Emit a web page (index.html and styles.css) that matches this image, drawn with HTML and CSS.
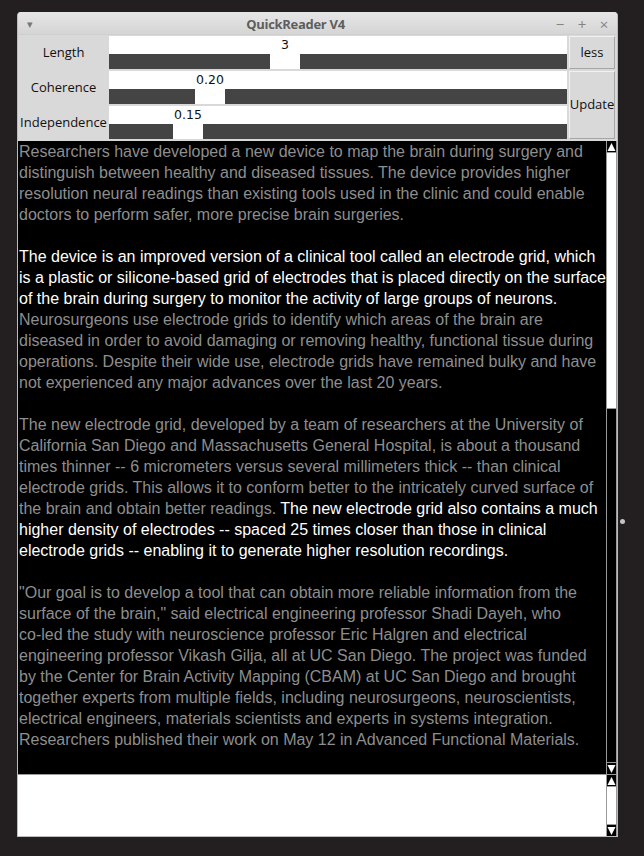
FILE: index.html
```html
<!DOCTYPE html>
<html>
<head>
<meta charset="utf-8">
<title>QuickReader V4</title>
<link rel="stylesheet" href="styles.css">
</head>
<body>
<div class="window">
  <div class="titlebar">
    <div class="tb-left">▾</div>
    <div class="tb-title">QuickReader V4</div>
    <div class="tb-right"><span>−</span><span>+</span><span>×</span></div>
  </div>
  <div class="controls">
    <div class="label r1">Length</div>
    <div class="slider r1">
      <div class="val-row"><div class="spacer" style="width:161px"></div><div class="val">3</div></div>
      <div class="trough"><div class="seg" style="width:161px"></div><div class="thumb"></div><div class="seg fill"></div></div>
    </div>
    <div class="btn b-less">less</div>

    <div class="label r2">Coherence</div>
    <div class="slider r2">
      <div class="val-row"><div class="spacer" style="width:86px"></div><div class="val">0.20</div></div>
      <div class="trough"><div class="seg" style="width:86px"></div><div class="thumb"></div><div class="seg fill"></div></div>
    </div>
    <div class="btn b-update">Update</div>

    <div class="label r3">Independence</div>
    <div class="slider r3">
      <div class="val-row"><div class="spacer" style="width:64px"></div><div class="val">0.15</div></div>
      <div class="trough"><div class="seg" style="width:64px"></div><div class="thumb"></div><div class="seg fill"></div></div>
    </div>
  </div>

  <div class="textrow">
    <div class="text">Researchers have developed a new device to map the brain during surgery and<br>distinguish between healthy and diseased tissues. The device provides higher<br>resolution neural readings than existing tools used in the clinic and could enable<br>doctors to perform safer, more precise brain surgeries.<br>&nbsp;<br><span class="hi">The device is an improved version of a clinical tool called an electrode grid, which<br>is a plastic or silicone-based grid of electrodes that is placed directly on the surface<br>of the brain during surgery to monitor the activity of large groups of neurons.</span><br>Neurosurgeons use electrode grids to identify which areas of the brain are<br>diseased in order to avoid damaging or removing healthy, functional tissue during<br>operations. Despite their wide use, electrode grids have remained bulky and have<br>not experienced any major advances over the last 20 years.<br>&nbsp;<br>The new electrode grid, developed by a team of researchers at the University of<br>California San Diego and Massachusetts General Hospital, is about a thousand<br>times thinner -- 6 micrometers versus several millimeters thick -- than clinical<br>electrode grids. This allows it to conform better to the intricately curved surface of<br>the brain and obtain better readings. <span class="hi">The new electrode grid also contains a much<br>higher density of electrodes -- spaced 25 times closer than those in clinical<br>electrode grids -- enabling it to generate higher resolution recordings.</span><br>&nbsp;<br>"Our goal is to develop a tool that can obtain more reliable information from the<br>surface of the brain," said electrical engineering professor Shadi Dayeh, who<br>co-led the study with neuroscience professor Eric Halgren and electrical<br>engineering professor Vikash Gilja, all at UC San Diego. The project was funded<br>by the Center for Brain Activity Mapping (CBAM) at UC San Diego and brought<br>together experts from multiple fields, including neurosurgeons, neuroscientists,<br>electrical engineers, materials scientists and experts in systems integration.<br>Researchers published their work on May 12 in Advanced Functional Materials.</div>
    <div class="sb sb-dark">
      <div class="arrow"><svg width="9" height="10" viewBox="0 0 9 10"><polygon points="4.5,1 8.5,9 0.5,9" fill="#fff"/></svg></div>
      <div class="sb-thumb"></div>
      <div class="sb-trough"></div>
      <div class="arrow"><svg width="9" height="10" viewBox="0 0 9 10"><polygon points="0.5,1 8.5,1 4.5,9" fill="#fff"/></svg></div>
    </div>
  </div>

  <div class="textrow lower">
    <div class="text2"></div>
    <div class="sb sb-light">
      <div class="arrow"><svg width="9" height="10" viewBox="0 0 9 10"><polygon points="4.5,1 8.5,9 0.5,9" fill="#fff"/></svg></div>
      <div class="sb-trough"></div>
      <div class="arrow"><svg width="9" height="10" viewBox="0 0 9 10"><polygon points="0.5,1 8.5,1 4.5,9" fill="#fff"/></svg></div>
    </div>
  </div>
</div>
<div class="grip"></div>
</body>
</html>
```
FILE: styles.css
```css
html, body {
  margin: 0;
  padding: 0;
  background: #231f20;
  width: 644px;
  height: 856px;
  overflow: hidden;
}

.window {
  margin: 12px 0 0 17px;
  width: 601px;
  box-sizing: border-box;
  border-left: 1px solid #bcbcbc;
  border-right: 1px solid #bcbcbc;
  border-bottom: 1px solid #bcbcbc;
  border-radius: 4px 4px 0 0;
  background: #d9d9d9;
  overflow: hidden;
}

.titlebar {
  height: 23px;
  display: grid;
  grid-template-columns: 30px 1fr 74px;
  align-items: center;
  background: linear-gradient(#e6e6e6, #d5d5d5);
  border-bottom: 1px solid #cfcfcf;
  box-sizing: border-box;
  font-family: "Open Sans", Lato, sans-serif;
  color: #6a6a6a;
}
.tb-left {
  padding-left: 9px;
  font-size: 11px;
  color: #777;
  padding-top: 1px;
}
.tb-title {
  text-align: center;
  font-weight: 700;
  font-size: 13px;
  letter-spacing: -0.3px;
  color: #5e5e5e;
  padding-top: 1px;
}
.tb-right {
  display: flex;
  justify-content: flex-end;
  padding-right: 2px;
  font-size: 15px;
  color: #848484;
  padding-top: 1px;
}
.tb-right span {
  width: 22px;
  text-align: center;
}

.controls {
  display: grid;
  grid-template-columns: 91px 458px 48px;
  grid-template-rows: 33px 33px 33px;
  column-gap: 0;
  row-gap: 2px;
  padding: 1px 0 1px 0;
  font-family: "Open Sans", "DejaVu Sans", sans-serif;
  font-size: 13px;
  color: #111;
}
.controls .btn { margin-left: 2px; }
.label {
  display: flex;
  align-items: center;
  justify-content: center;
  padding-bottom: 2px;
}
.r1 { grid-row: 1; }
.r2 { grid-row: 2; }
.r3 { grid-row: 3; }
.label { grid-column: 1; }
.slider { grid-column: 2; }

.slider {
  display: flex;
  flex-direction: column;
  background: #fff;
}
.val-row {
  height: 18px;
  display: flex;
}
.val {
  width: 30px;
  text-align: center;
  font-family: "DejaVu Sans", sans-serif;
  font-size: 12.5px;
  line-height: 18px;
  white-space: nowrap;
  display: flex;
  justify-content: center;
}
.trough {
  height: 15px;
  display: flex;
}
.seg { background: #444; }
.seg.fill { flex: 1; }
.thumb {
  width: 30px;
  background: #fff;
}

.btn {
  grid-column: 3;
  display: flex;
  align-items: center;
  justify-content: center;
  background: #d9d9d9;
  border: 1px solid;
  border-color: #f2f2f2 #a5a5a5 #a5a5a5 #f2f2f2;
  box-sizing: border-box;
  padding-bottom: 2px;
}
.b-less { grid-row: 1; }
.b-update { grid-row: 2 / span 2; }

.textrow {
  display: flex;
  height: 633px;
  margin-top: 1px;
}
.text {
  flex: 1;
  background: #000;
  color: #8e8e8e;
  font-family: "Liberation Sans", Arial, sans-serif;
  font-size: 16px;
  line-height: 21px;
  padding: 0 0 0 1px;
  white-space: nowrap;
  overflow: hidden;
}
.hi { color: #fff; }

.sb {
  width: 11px;
  box-sizing: border-box;
  border-left: 1px solid #9a9a9a;
  border-right: 1px solid #9a9a9a;
  display: flex;
  flex-direction: column;
}
.sb-dark { background: #000; }
.sb-light { background: #fff; }
.arrow {
  height: 12px;
  background: #000;
  border-bottom: 1px solid #9a9a9a;
  box-sizing: border-box;
  display: flex;
  align-items: center;
  justify-content: center;
}
.sb-trough + .arrow {
  border-bottom: none;
  border-top: 1px solid #9a9a9a;
}
.sb-thumb {
  height: 255px;
  background: #fff;
  border-bottom: 1px solid #9a9a9a;
}
.sb-trough { flex: 1; }

.textrow.lower {
  height: 61px;
  margin-top: 0;
  border-top: 1px solid #9a9a9a;
}
.text2 {
  flex: 1;
  background: #fff;
}

.grip {
  position: absolute;
  left: 620px;
  top: 519px;
  width: 5px;
  height: 5px;
  border-radius: 50%;
  background: #c4c4c4;
}
```
